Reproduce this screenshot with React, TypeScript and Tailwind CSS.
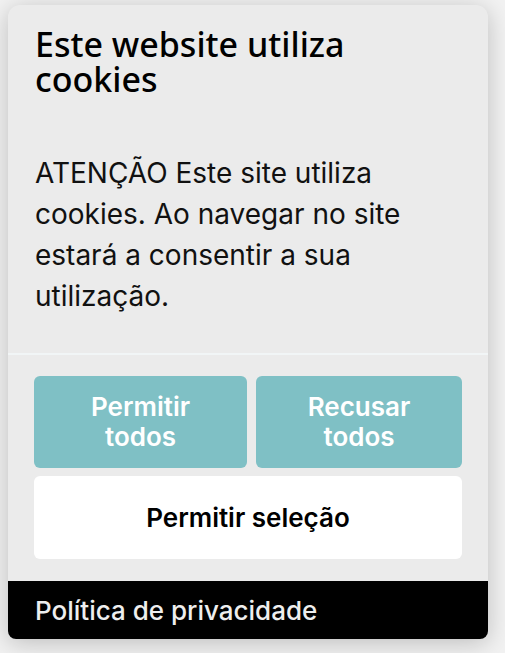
export default function App() {
  return (
    <div className="w-[505px] h-[653px] bg-[#f2f2f2] overflow-hidden pt-[5px] pl-[8px]">
      <div className="w-[480px] h-[634px] rounded-t-[12px] rounded-b-[8px] bg-[#ebebeb] shadow-[0_4px_24px_rgba(0,0,0,0.22)] flex flex-col overflow-hidden">
        <div className="px-[27px] pt-[22px] pb-[36px]">
          <h1 className="w-[380px] text-[34px] leading-[35px] font-medium text-black" style={{ fontFamily: '"Noto Sans", "Open Sans", sans-serif' }}>
            Este website utiliza cookies
          </h1>
          <p className="mt-[56px] w-[400px] text-[28px] leading-[41px] text-[#111]" style={{ fontFamily: 'Inter, "Noto Sans", sans-serif' }}>
            ATENÇÃO Este site utiliza cookies. Ao navegar no site estará a consentir a sua utilização.
          </p>
        </div>
        <div className="h-[2px] bg-[#f1f5f6]" />
        <div className="px-[26px] pt-[21px] pb-[22px] flex flex-col gap-[8px]" style={{ fontFamily: 'Inter, sans-serif' }}>
          <div className="flex gap-[9px]">
            <button className="w-[213px] h-[92px] rounded-[6px] bg-[#7fc0c5] text-white font-semibold text-[26px] leading-[30px]">
              Permitir<br />todos
            </button>
            <button className="w-[206px] h-[92px] rounded-[6px] bg-[#7fc0c5] text-white font-semibold text-[26px] leading-[30px]">
              Recusar<br />todos
            </button>
          </div>
          <button className="w-[428px] h-[83px] rounded-[6px] bg-white text-black font-semibold text-[26px]">
            Permitir seleção
          </button>
        </div>
        <div className="flex-1 bg-black flex items-center px-[27px]" style={{ fontFamily: 'Inter, sans-serif' }}>
          <span className="text-[#eeeeee] text-[26px] font-medium">Política de privacidade</span>
        </div>
      </div>
    </div>
  );
}
